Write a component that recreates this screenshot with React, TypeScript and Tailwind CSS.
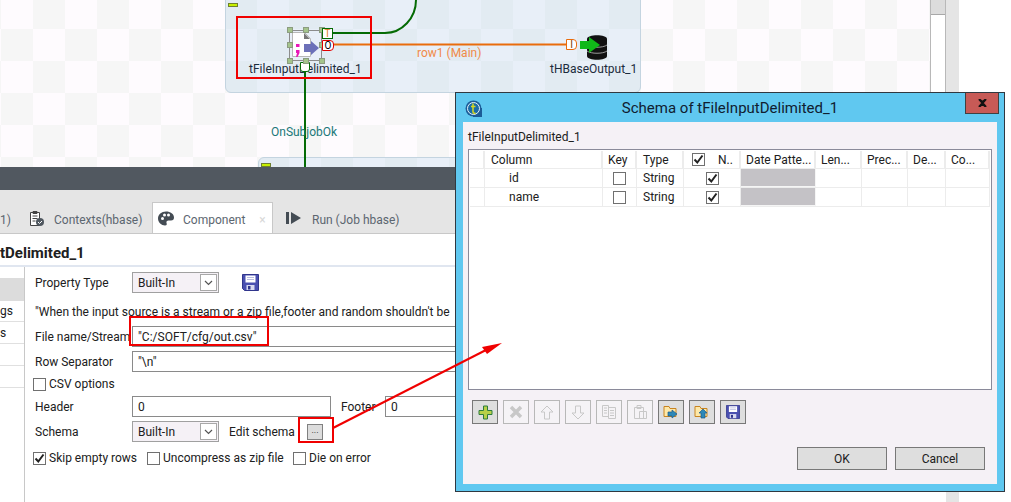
import type { ReactNode } from 'react';

const TABLE_COLS = 'grid-cols-[15px_118px_34px_47px_57px_75px_46px_46px_38px_44px]';

function Checkbox({ checked, className = '' }: { checked?: boolean; className?: string }) {
  return (
    <span className={`flex h-[13px] w-[13px] shrink-0 items-center justify-center border border-[#707070] bg-white ${className}`}>
      {checked && (
        <svg width="11" height="11" viewBox="0 0 11 11">
          <path d="M1.5 5.5 4.3 8.5 9.5 1.5" fill="none" stroke="#222" strokeWidth="2" />
        </svg>
      )}
    </span>
  );
}

function Select({ value }: { value: string }) {
  return (
    <div className="flex h-[21px] w-[87px] items-center justify-between border border-[#a0a0a0] bg-[#f5f1f6] pr-[1px] pl-[5px]">
      <span>{value}</span>
      <span className="flex h-[17px] w-[17px] items-center justify-center border border-[#a8a8a8] bg-white">
        <svg width="9" height="6" viewBox="0 0 9 6">
          <path d="M1 1 4.5 4.5 8 1" fill="none" stroke="#555" strokeWidth="1.2" />
        </svg>
      </span>
    </div>
  );
}

function TextField({ value, className = '' }: { value: string; className?: string }) {
  return (
    <div className={`flex h-[21px] items-center overflow-hidden border border-[#8a8a8a] bg-white px-[5px] whitespace-pre ${className}`}>
      {value}
    </div>
  );
}

function Row({ label, children, className = '' }: { label: string; children: ReactNode; className?: string }) {
  return (
    <div className={`flex h-[21px] items-center ${className}`}>
      <span className="w-[97px] shrink-0 whitespace-nowrap">{label}</span>
      {children}
    </div>
  );
}

function CheckLabel({ label, checked, className = '' }: { label: string; checked?: boolean; className?: string }) {
  return (
    <label className={`flex items-center gap-[3px] whitespace-nowrap ${className}`}>
      <Checkbox checked={checked} />
      {label}
    </label>
  );
}

function FloppyIcon({ size = 17 }: { size?: number }) {
  return (
    <svg width={size} height={size} viewBox="0 0 17 17">
      <path d="M.5.5h16v16H2.5l-2-2z" fill="#4a50b0" stroke="#30358c" />
      <rect x="3.5" y="1.5" width="10" height="7" fill="#fff" />
      <path d="M5 3.5h7M5 5.5h7" stroke="#b8bce0" />
      <rect x="4.5" y="11" width="8" height="5" fill="#d8daf0" />
      <rect x="6" y="12" width="2.5" height="3.5" fill="#30358c" />
    </svg>
  );
}

function Connector({ letter, className, text }: { letter: string; className: string; text: string }) {
  return (
    <span className={`absolute flex items-center justify-center border bg-white text-[10px] leading-none ${className} ${text}`}>
      {letter}
    </span>
  );
}

function Handle({ className }: { className: string }) {
  return <span className={`absolute h-[6px] w-[6px] border border-[#8c9c80] bg-[#a4c48c] ${className}`} />;
}

function Canvas() {
  return (
    <div className="relative w-[930px] overflow-hidden bg-[conic-gradient(#f6f6f6_25%,#fefbfe_0_50%,#f6f6f6_0_75%,#fefbfe_0)] bg-size-[64px_64px] bg-position-[1px_-3px]">
      {/* subjobs */}
      <div className="absolute top-[-10px] left-[225px] h-[103px] w-[416px] rounded-b-[6px] border border-[#c4d4e0] bg-[#a8cce8]/25" />
      <div className="absolute top-[157px] left-[258px] h-[30px] w-[416px] rounded-t-[6px] border border-[#c4d4e0] bg-[#a8cce8]/25" />
      <span className="absolute top-[3px] left-[228px] h-[4px] w-[10px] border border-[#708030] bg-[#c8f000]" />
      <span className="absolute top-[163px] left-[261px] h-[4px] w-[10px] border border-[#708030] bg-[#c8f000]" />

      {/* links */}
      <svg className="absolute top-0 left-0" width="930" height="167" viewBox="0 0 930 167">
        <path d="M332 33H385C402 33 416 18 416 0" fill="none" stroke="#056b05" strokeWidth="2" />
        <path d="M333 44.500H567" fill="none" stroke="#e96c0c" strokeWidth="2" />
        <path d="M305 70V167" fill="none" stroke="#056b05" strokeWidth="2" />
      </svg>

      {/* tFileInputDelimited_1 */}
      <span className="absolute top-[61px] left-[249px] text-[#1c2c3c]">tFileInputDelimited_1</span>
      <div className="absolute top-[30px] left-[289px] h-[31px] w-[33px] border border-[#8c8c8c]" />
      <svg className="absolute top-[32px] left-[292px]" width="28" height="26" viewBox="0 0 28 26">
        <path d="M.5.500h12l6 6v18H.5z" fill="#fff" stroke="#b8b8b8" />
        <path d="M12 1v6h6z" fill="#777" />
        <path d="M4 12h3.500v3H4zM4 18h3.500v3l-2 4H4l1-4H4z" fill="#e818b8" />
        <path d="M12 12h7V9l8 7-8 7v-3h-7z" fill="#6c70b8" />
      </svg>
      <Handle className="top-[27px] left-[287px]" />
      <Handle className="top-[27px] left-[303px]" />
      <Handle className="top-[27px] left-[319px]" />
      <Handle className="top-[42px] left-[287px]" />
      <Handle className="top-[42px] left-[319px]" />
      <Handle className="top-[58px] left-[287px]" />
      <Handle className="top-[58px] left-[319px]" />
      <Connector letter="T" className="top-[28px] left-[322px] h-[11px] w-[11px] border-[#056b05]" text="text-[#e07a20]" />
      <Connector letter="O" className="top-[40px] left-[322px] h-[11px] w-[12px] rounded-r-[4px] border-[#e00000]" text="text-black" />
      <Connector letter="" className="top-[62px] left-[300px] h-[10px] w-[10px] rounded-b-[3px] border-[#056b05]" text="" />
      <Handle className="top-[58px] left-[303px]" />

      <span className="absolute top-[45px] left-[417px] text-[#f08a48]">row1 (Main)</span>
      <span className="absolute top-[124px] left-[271px] text-[#1a7878]">OnSubjobOk</span>

      {/* tHBaseOutput_1 */}
      <Connector letter="I" className="top-[39px] left-[566px] h-[11px] w-[11px] rounded-r-[4px] border-[#e96c0c]" text="text-[#804000]" />
      <svg className="absolute top-[34px] left-[580px]" width="28" height="27" viewBox="0 0 28 27">
        <path d="M7 5C7 0 27 0 27 5V22C27 27 7 27 7 22z" fill="#111" />
        <path d="M7 11C11 14 23 14 27 11M7 17C11 20 23 20 27 17" fill="none" stroke="#999" />
        <path d="M0 7H9V3L20 11 9 19V15H0z" fill="#10b818" />
      </svg>
      <span className="absolute top-[61px] left-[550px] text-[#1c2c3c]">tHBaseOutput_1</span>
    </div>
  );
}

function BottomPanel() {
  return (
    <>
      <div className="h-[23px] shrink-0 bg-[#515860]" />
      <div className="flex h-[44px] shrink-0 items-end border-b border-[#c8c8c8] bg-[#e5e5e5] text-[#5c6670]">
        <div className="flex h-[30px] w-[152px] items-center">
          <span className="mt-1 w-[28px]">1)</span>
          <svg width="17" height="17" viewBox="0 0 17 17">
            <path d="M2.500 2.500h9v13h-9zM5 1.500h4v2H5z" fill="#fff" stroke="#444" />
            <path d="M4.500 6h5M4.500 8.500h5M4.500 11h3" stroke="#444" />
            <circle cx="12" cy="12" r="4" fill="#505860" />
            <path d="M10 12l1.500 1.500L14 11" fill="none" stroke="#fff" />
          </svg>
          <span className="mt-1 ml-[9px]">Contexts(hbase)</span>
        </div>
        <div className="flex h-[31px] w-[121px] items-center border-x border-t border-[#c8c8c8] bg-white pl-[5px]">
          <svg width="16" height="15" viewBox="0 0 16 15">
            <path fillRule="evenodd" d="M8 .500C3.500.500 0 3.500 0 7.500S3.500 14.500 7 14.500c2 0 2-1.500 1.500-2.500-.5-1.500.5-2.500 2-2.500H13c2 0 3-1 3-3C16 3 12.500.500 8 .500zM3 7.500a1.500 1.500 0 1 1 3 0 1.500 1.500 0 0 1-3 0zm2-3.500a1.500 1.500 0 1 1 3 0 1.500 1.500 0 0 1-3 0zm4 0a1.500 1.500 0 1 1 3 0 1.500 1.500 0 0 1-3 0z" fill="#444c54" />
          </svg>
          <span className="mt-1 ml-[9px]">Component</span>
          <span className="mt-1 ml-[14px] text-[#d8d8d8]">×</span>
        </div>
        <div className="flex h-[30px] items-center pl-[13px]">
          <svg width="16" height="14" viewBox="0 0 16 14">
            <path d="M0 1h3v12H0zM5 1l10 6L5 13z" fill="#444c54" />
          </svg>
          <span className="mt-1 ml-[10px]">Run (Job hbase)</span>
        </div>
      </div>
      <div className="flex h-[33px] shrink-0 items-center border-b-2 border-[#e0e6f0] bg-white pt-[7px] text-[15px] font-bold text-[#202020]">
        tDelimited_1
      </div>
      <div className="flex min-h-0 flex-1 bg-white">
        <div className="w-[25px] shrink-0 border-r border-[#c8c8c8] pt-[11px]">
          <div className="h-[23px] bg-[#dcdcdc]" />
          <div className="flex h-[21px] items-center border-b border-[#e0e0e0]">gs</div>
          <div className="flex h-[22px] items-center border-b border-[#e0e0e0]">s</div>
          <div className="h-[22px] border-b border-[#e0e0e0]" />
          <div className="h-[22px] border-b border-[#e0e0e0]" />
        </div>
        <div className="flex min-w-0 flex-1 flex-col pt-[5px] pl-[10px]">
          <Row label="Property Type">
            <Select value="Built-In" />
            <span className="ml-[23px]">
              <FloppyIcon />
            </span>
          </Row>
          <div className="mt-[11px] h-[16px] whitespace-nowrap">
            "When the input source is a stream or a zip file,footer and random shouldn't be
          </div>
          <Row label="File name/Stream" className="mt-[6px]">
            <TextField value={'"C:/SOFT/cfg/out.csv"'} className="flex-1" />
          </Row>
          <Row label="Row Separator" className="mt-1">
            <TextField value={'"\\n"'} className="flex-1" />
          </Row>
          <CheckLabel label="CSV options" className="mt-1 -ml-[2px] h-[16px]" />
          <Row label="Header" className="mt-1">
            <TextField value="0" className="w-[199px]" />
            <span className="ml-[10px] w-[44px]">Footer</span>
            <TextField value="0" className="flex-1" />
          </Row>
          <Row label="Schema" className="mt-1">
            <Select value="Built-In" />
            <span className="ml-[10px] w-[78px]">Edit schema</span>
            <span className="flex h-[16px] w-[16px] items-start justify-center border border-[#808080] bg-[#dcdcdc] text-[9px] leading-[10px]">...</span>
          </Row>
          <div className="mt-2 -ml-[2px] flex h-[16px] items-center">
            <CheckLabel label="Skip empty rows" checked className="w-[114px]" />
            <CheckLabel label="Uncompress as zip file" className="w-[146px]" />
            <CheckLabel label="Die on error" />
          </div>
        </div>
      </div>
    </>
  );
}

function ToolButton({ children, disabled }: { children: ReactNode; disabled?: boolean }) {
  return (
    <span className={`flex h-[24px] w-[26px] items-center justify-center border ${disabled ? 'border-[#b8b8b8] bg-[#f5f3f6]' : 'border-[#787878] bg-[#dedede]'}`}>
      {children}
    </span>
  );
}

function FolderIcon({ up }: { up?: boolean }) {
  return (
    <svg width="16" height="16" viewBox="0 0 16 16">
      <path d="M1 2.500h5l1 2h6v8H1z" fill="#fde8a8" stroke="#c88420" />
      {up ? (
        <path d="M9 5l4 4h-2v5H7V9H5z" fill="#2c88b8" stroke="#1c5a88" strokeWidth=".7" />
      ) : (
        <path d="M5 8h4V6l5 4-5 4v-2H5z" fill="#2c88b8" stroke="#1c5a88" strokeWidth=".7" />
      )}
    </svg>
  );
}

function SchemaDialog() {
  const headers = ['', 'Column', 'Key', 'Type', '', 'Date Patte...', 'Len...', 'Prec...', 'De...', 'Co...'];
  const rows = ['id', 'name'];
  return (
    <div className="absolute top-[92px] left-[455px] flex h-[400px] w-[550px] flex-col border border-[#303840] bg-[#60c8f0]">
      <div className="relative flex h-[29px] shrink-0 items-center justify-center text-[15px] text-[#102030]">
        <svg className="absolute top-[7px] left-[9px]" width="17" height="17" viewBox="0 0 17 17">
          <rect x="8" y="8" width="9" height="9" fill="#1c5c98" />
          <circle cx="8.500" cy="8.500" r="8" fill="#1c5c98" />
          <circle cx="8.500" cy="8.500" r="6" fill="#1c6ca8" stroke="#e8f4fa" />
          <path d="M8 3.500v8.500c0 1 1 1.500 2.500 1M6 6.500h4.500" fill="none" stroke="#d8d820" strokeWidth="1.500" />
        </svg>
        Schema of tFileInputDelimited_1
        <span className="absolute top-0 right-[5px] flex h-[21px] w-[34px] items-center justify-center border border-[#404040] border-t-0 bg-[#c75a56]">
          <svg width="9" height="8" viewBox="0 0 9 8">
            <path d="M1 0 4.500 3 8 0M1 8 4.500 5 8 8M1 0 8 8M8 0 1 8" fill="none" stroke="#111" strokeWidth="2" />
          </svg>
        </span>
      </div>
      <div className="mx-[7px] mb-[7px] flex min-h-0 flex-1 flex-col bg-[#f5f1f6] px-[5px]">
        <div className="flex h-[27px] shrink-0 items-center pt-[2px]">tFileInputDelimited_1</div>
        <div className="h-[241px] shrink-0 border border-[#8a8a9a] bg-white p-[1px]">
          <div className={`grid h-[18px] ${TABLE_COLS} border-b border-[#ececec]`}>
            {headers.map((header, i) => (
              <div key={i} className={`flex items-center overflow-hidden border-r-2 border-[#ececec] whitespace-nowrap ${i === 4 ? 'pl-[8px]' : i === 1 || i === 3 ? 'pl-[6px]' : 'pl-[5px]'}`}>
                {i === 4 ? (
                  <>
                    <Checkbox checked className="mr-[13px]" />
                    N..
                  </>
                ) : (
                  header
                )}
              </div>
            ))}
          </div>
          {rows.map((row) => (
            <div key={row} className={`grid h-[19px] ${TABLE_COLS} border-b border-[#ececec]`}>
              <div className="border-r border-[#ececec]" />
              <div className="flex items-center border-r border-[#ececec] pl-[24px]">{row}</div>
              <div className="flex items-center justify-center border-r border-[#ececec]">
                <Checkbox />
              </div>
              <div className="flex items-center border-r border-[#ececec] pl-[6px]">String</div>
              <div className="flex items-center justify-center border-r border-[#ececec]">
                <Checkbox checked />
              </div>
              <div className="border-r border-b border-[#f5f5f5] bg-[#c4c2c6]" />
              <div className="border-r border-[#ececec]" />
              <div className="border-r border-[#ececec]" />
              <div className="border-r border-[#ececec]" />
              <div className="border-r border-[#ececec]" />
            </div>
          ))}
        </div>
        <div className="mt-[10px] flex h-[24px] shrink-0 gap-[5px] pl-[4px]">
          <ToolButton>
            <svg width="15" height="15" viewBox="0 0 15 15">
              <path d="M5.500 1h4v4.500H14v4H9.500V14h-4V9.500H1v-4h4.500z" fill="#b8d048" stroke="#2c7c3c" />
            </svg>
          </ToolButton>
          <ToolButton disabled>
            <svg width="14" height="14" viewBox="0 0 14 14">
              <path d="M2 2l10 10M12 2 2 12" stroke="#c8c8c8" strokeWidth="3.500" />
            </svg>
          </ToolButton>
          <ToolButton disabled>
            <svg width="14" height="15" viewBox="0 0 14 15">
              <path d="M7 1l6 6H9.500v7h-5V7H1z" fill="none" stroke="#c8c8c8" />
            </svg>
          </ToolButton>
          <ToolButton disabled>
            <svg width="14" height="15" viewBox="0 0 14 15">
              <path d="M7 14l6-6H9.500V1h-5v7H1z" fill="none" stroke="#c8c8c8" />
            </svg>
          </ToolButton>
          <ToolButton disabled>
            <svg width="16" height="16" viewBox="0 0 16 16">
              <path d="M1.500 1.500h6v11h-6zM7.500 3.500h7v11h-7zM9 6.500h4M9 9h4M9 11.500h4M3 4h3M3 6.500h3M3 9h3" fill="none" stroke="#c8c8c8" />
            </svg>
          </ToolButton>
          <ToolButton disabled>
            <svg width="16" height="16" viewBox="0 0 16 16">
              <path d="M2.500 3.500h9v11h-9zM5 1.500h4v3H5zM7.500 7.500h7v7h-7z" fill="none" stroke="#c8c8c8" />
            </svg>
          </ToolButton>
          <ToolButton>
            <FolderIcon />
          </ToolButton>
          <ToolButton>
            <FolderIcon up />
          </ToolButton>
          <ToolButton>
            <FloppyIcon size={14} />
          </ToolButton>
        </div>
        <div className="mt-[23px] flex justify-end gap-2 pr-[7px]">
          <span className="flex h-[23px] w-[90px] items-center justify-center border border-[#787878] bg-[#dedede]">OK</span>
          <span className="flex h-[23px] w-[90px] items-center justify-center border border-[#787878] bg-[#dedede]">Cancel</span>
        </div>
      </div>
    </div>
  );
}

function Annotations() {
  return (
    <>
      <div className="absolute top-[16px] left-[236px] h-[63px] w-[136px] border-2 border-[#f00000]" />
      <div className="absolute top-[316px] left-[129px] h-[30px] w-[140px] border-2 border-[#f00000]" />
      <div className="absolute top-[417px] left-[298px] h-[26px] w-[36px] border-2 border-[#f00000]" />
      <svg className="absolute top-0 left-0" width="1011" height="502" viewBox="0 0 1011 502">
        <path d="M333 428 486 350" fill="none" stroke="#f00000" strokeWidth="2" />
        <path d="M502 343 482 347 487 354z" fill="#f00000" />
      </svg>
    </>
  );
}

export default function App() {
  return (
    <div className="relative flex h-[502px] w-[1011px] overflow-hidden bg-white font-['Roboto',sans-serif] text-[12px] leading-[16px] text-[#202020]">
      <div className="flex w-[946px] shrink-0 flex-col">
        <div className="flex h-[167px] shrink-0">
          <Canvas />
          <div className="flex w-[16px] flex-col border-x border-[#b8b8b8] bg-white">
            <div className="h-[15px] border-b border-[#a8a8a8] bg-[#dcdcdc]" />
          </div>
        </div>
        <BottomPanel />
      </div>
      <div className="w-[13px] shrink-0 bg-[#e5e5e5]" />
      <SchemaDialog />
      <Annotations />
    </div>
  );
}
